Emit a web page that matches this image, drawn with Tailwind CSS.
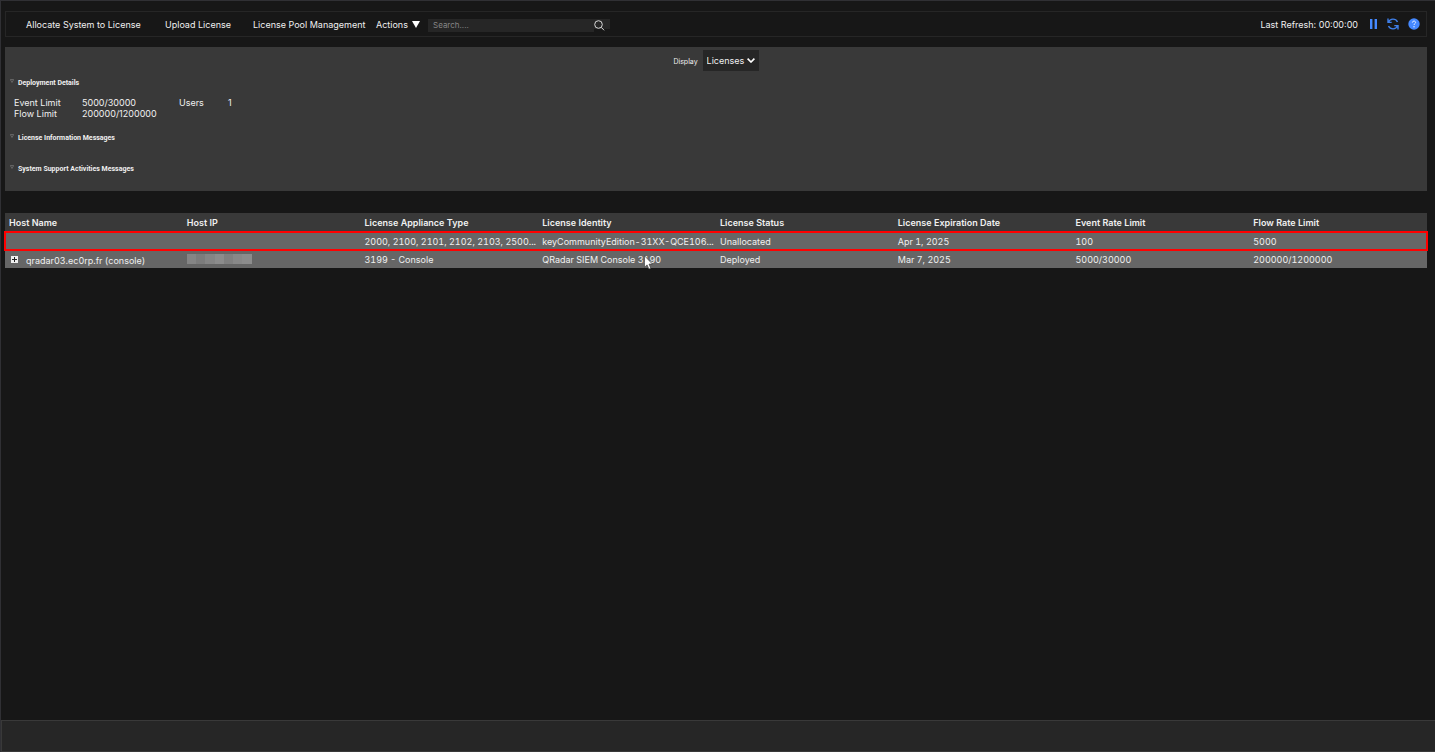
<!DOCTYPE html>
<html lang="en">
<head>
<meta charset="utf-8">
<title>System and License Management</title>
<script src="https://cdn.jsdelivr.net/npm/@tailwindcss/browser@4"></script>
</head>
<body class="flex min-h-screen flex-col border-t border-l border-[#303034] bg-[#171717] font-['Inter',sans-serif] text-[9px] leading-[11px] text-[#f0f0f0]">
<header class="mt-[10px] mr-2 ml-1 flex h-[26px] items-center border border-[#262626] pr-[6px] pl-5">
  <nav class="flex items-center">
    <button class="mr-[22px] w-[117px] text-left text-[9px] whitespace-nowrap">Allocate System to License</button>
    <button class="mr-[22px] w-[66px] text-left text-[9px] whitespace-nowrap">Upload License</button>
    <button class="mr-[10px] w-[113px] text-left text-[9px] whitespace-nowrap">License Pool Management</button>
    <button class="flex w-[44px] items-center justify-between text-[9px]">Actions
      <svg class="h-[7px] w-2" viewBox="0 0 8 7" fill="#fff" aria-hidden="true"><path d="M0 0h8L4 7z"/></svg>
    </button>
  </nav>
  <form class="ml-2 flex items-start pt-[2px]">
    <input type="text" aria-label="Search" placeholder="Search...." class="h-[13px] w-[166px] bg-[#262626] px-[5px] text-[8px] text-white outline-none placeholder:text-[#858585]">
    <button type="button" aria-label="Search" class="h-[13px] w-4">
      <svg class="h-[12px] w-4" viewBox="0 0 16 12" fill="none" stroke="#d8d8d8"><path d="M0 0h16v10H0z" fill="#262626" stroke="none"/><circle cx="4.5" cy="5.5" r="3.8"/><path d="M7.3 8.4l2.8 2.9"/></svg>
    </button>
  </form>
  <div class="ml-auto flex items-center">
    <span class="whitespace-nowrap">Last Refresh: 00:00:00</span>
    <button aria-label="Pause" class="ml-3"><svg class="h-[10px] w-[7px]" viewBox="0 0 7 10" fill="#4589ff"><path d="M0 0h2.4v10H0zM4.6 0H7v10H4.6z"/></svg></button>
    <button aria-label="Refresh" class="ml-[10px]"><svg class="h-3 w-3" viewBox="0 0 12 12" fill="none" stroke="#3f7fe8" stroke-width="1.4"><path d="M1.4 4.2A5 5 0 0 1 10.5 4M10.6 7.8A5 5 0 0 1 1.5 8M1 .6v3.8h3.7M11 11.4V7.6H7.3"/></svg></button>
    <button aria-label="Help" class="ml-[9px]"><svg class="h-3 w-3" viewBox="0 0 12 12"><circle cx="6" cy="6" r="5.7" fill="#4589ff"/><path d="M4.4 4.6C4.4 2.5 7.6 2.6 7.6 4.5 7.6 5.6 6 5.7 6 7" fill="none" stroke="#e8f0ff"/><circle cx="6" cy="8.7" r=".7" fill="#e8f0ff"/></svg></button>
  </div>
</header>

<section class="mt-[10px] mr-2 ml-1 h-[144px] bg-[#393939]">
  <div class="flex items-center justify-center pt-[3px]">
    <label for="display" class="mr-[5px] pt-[2px] text-[7px]">Display</label>
    <div class="relative h-[21px] w-[56px] bg-[#262626]">
      <select id="display" class="h-full w-full appearance-none bg-transparent pl-1 text-[9px] outline-none"><option class="bg-[#262626]">Licenses</option></select>
      <svg class="pointer-events-none absolute top-2 right-1 h-[5px] w-2" viewBox="0 0 8 5" fill="none" stroke="#fff" stroke-width="1.6"><path d="M.6.6L4 4 7.4.6"/></svg>
    </div>
  </div>
  <h2 class="mt-[7px] flex gap-1 pl-[5px] font-['Roboto',sans-serif] text-[7px] font-bold"><svg class="mt-[1px] h-1 w-1" viewBox="0 0 4 4" fill="none" stroke="#777" stroke-width=".7"><path d="M.3.5h3.4L2 3.5z"/></svg>Deployment Details</h2>
  <dl class="mt-2 grid grid-cols-[68px_97px_49px_1fr] pl-[9px]">
    <dt>Event Limit</dt><dd>5000/30000</dd><dt>Users</dt><dd>1</dd>
    <dt>Flow Limit</dt><dd>200000/1200000</dd>
  </dl>
  <h2 class="mt-[14px] flex gap-1 pl-[5px] font-['Roboto',sans-serif] text-[7px] font-bold"><svg class="mt-[1px] h-1 w-1" viewBox="0 0 4 4" fill="none" stroke="#777" stroke-width=".7"><path d="M.3.5h3.4L2 3.5z"/></svg>License Information Messages</h2>
  <h2 class="mt-5 flex gap-1 pl-[5px] font-['Roboto',sans-serif] text-[7px] font-bold"><svg class="mt-[1px] h-1 w-1" viewBox="0 0 4 4" fill="none" stroke="#777" stroke-width=".7"><path d="M.3.5h3.4L2 3.5z"/></svg>System Support Activities Messages</h2>
</section>

<main class="relative mt-[22px] mr-2 ml-1 flex-1">
  <table class="w-full table-fixed border-collapse text-left tabular-nums">
    <thead class="bg-[#393939]">
      <tr class="h-[19px] *:pl-1 *:font-semibold *:whitespace-nowrap">
        <th>Host Name</th><th>Host IP</th><th>License Appliance Type</th><th>License Identity</th><th>License Status</th><th>License Expiration Date</th><th>Event Rate Limit</th><th>Flow Rate Limit</th>
      </tr>
    </thead>
    <tbody class="bg-[#666666]">
      <tr class="h-[18px] outline-2 -outline-offset-1 outline-[#ff0000] *:pl-1 *:whitespace-nowrap">
        <td></td><td></td><td>2000, 2100, 2101, 2102, 2103, 2500...</td><td>keyCommunityEdition-31XX-QCE106...</td><td>Unallocated</td><td>Apr 1, 2025</td><td>100</td><td>5000</td>
      </tr>
      <tr class="h-[18px] *:pl-1 *:whitespace-nowrap">
        <td><div class="flex items-center gap-2 pl-[2px]"><button aria-label="Expand"><svg class="h-[7px] w-[7px]" viewBox="0 0 7 7"><path fill="#f0f0f0" d="M0 0h7v7H0z"/><path stroke="#222" d="M1 3.5h5M3.5 1v5"/></svg></button><span class="pt-[2px]">qradar03.ec0rp.fr (console)</span></div></td>
        <td><div class="flex h-[10px] w-[65px] *:flex-1"><i class="bg-[#858585]"></i><i class="bg-[#7c7c7c]"></i><i class="bg-[#858585]"></i><i class="bg-[#8c8c8c]"></i><i class="bg-[#808080]"></i><i class="bg-[#888888]"></i><i class="bg-[#8c8c8c]"></i></div></td>
        <td>3199 - Console</td><td>QRadar SIEM Console 3190</td><td>Deployed</td><td>Mar 7, 2025</td><td>5000/30000</td><td>200000/1200000</td>
      </tr>
    </tbody>
  </table>
  <svg class="absolute top-[42px] left-[639px] h-[15px] w-[9px]" viewBox="0 0 9 15" aria-hidden="true"><path d="M.5.8v11.4l2.6-2.3 1.8 4.2 1.9-.8L5 9.1h3.4z" fill="#fff" stroke="#333" stroke-width=".6"/></svg>
</main>
<footer class="h-8 border-t border-b border-l border-[#393939] bg-[#262626]"></footer>
</body>
</html>
